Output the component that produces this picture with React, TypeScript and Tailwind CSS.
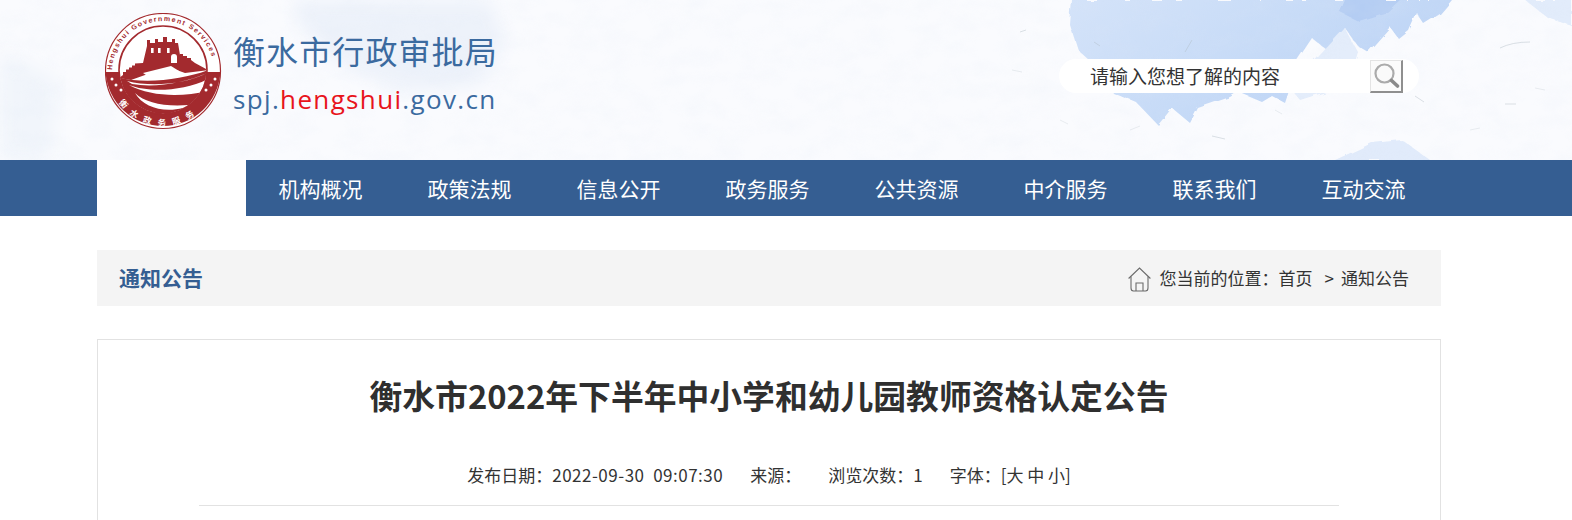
const NAV = ["机构概况", "政策法规", "信息公开", "政务服务", "公共资源", "中介服务", "联系我们", "互动交流"];

function HeaderWash() {
  return (
    <svg className="absolute inset-0 h-full w-full" viewBox="0 0 1572 160" preserveAspectRatio="none" aria-hidden="true">
      <defs>
        <linearGradient id="wash" x1="0" y1="0" x2="1" y2="0.5">
          <stop offset="0" stopColor="#d4e3f9" />
          <stop offset="0.55" stopColor="#c7dbf7" />
          <stop offset="1" stopColor="#bcd3f5" />
        </linearGradient>
        <filter id="rough" x="-5%" y="-5%" width="110%" height="110%">
          <feTurbulence type="fractalNoise" baseFrequency="0.06" numOctaves="3" seed="4" result="n" />
          <feDisplacementMap in="SourceGraphic" in2="n" scale="6" result="d" />
          <feGaussianBlur in="d" stdDeviation="0.7" />
        </filter>
        <filter id="softer"><feGaussianBlur stdDeviation="9" /></filter>
        <filter id="paper" x="0" y="0" width="100%" height="100%">
          <feTurbulence type="fractalNoise" baseFrequency="0.035 0.06" numOctaves="4" seed="9" />
          <feColorMatrix values="0 0 0 0 0.72  0 0 0 0 0.79  0 0 0 0 0.90  0.9 0 0 0 -0.33" />
        </filter>
      </defs>
      <rect width="1572" height="160" fill="#fafbfe" />
      <path d="M295 0 L490 0 L505 40 L480 85 L410 92 L335 62 L300 25Z" fill="#edf2fa" filter="url(#softer)" />
      <path d="M0 50 L60 80 L50 160 L0 160Z" fill="#f1f5fb" filter="url(#softer)" />
      <path d="M1072 0 L1452 0 L1440 14 L1424 24 L1416 12 L1408 30 L1398 38 L1390 27 L1368 52 L1358 46 L1345 28 L1332 54 L1312 38 L1296 62 L1290 88 L1285 103 L1272 96 L1262 102 L1238 92 L1230 97 L1198 108 L1190 123 L1172 108 L1158 125 L1136 102 L1112 92 L1100 70 L1078 50 L1070 25Z" fill="url(#wash)" filter="url(#rough)" />
      <path d="M1290 88 L1320 55 L1345 28 L1358 52 L1348 85 L1300 100Z" fill="#e4edfb" filter="url(#rough)" />
      <path d="M1345 0 L1400 0 L1385 14 L1360 22 L1340 12Z" fill="#b4cdf3" filter="url(#rough)" />
      <path d="M1525 0 L1572 0 L1572 26 L1548 18Z" fill="#e2ecfb" filter="url(#rough)" />
      <path d="M1335 160 L1372 143 L1402 140 L1430 160Z" fill="#e1ebfb" filter="url(#rough)" />
      <rect width="1572" height="160" filter="url(#paper)" opacity="0.25" />
      <path d="M1500 48 Q1512 42 1530 42 M1185 52 L1192 40 M1094 42 L1100 46 M1415 96 L1424 102 M1505 104 L1516 104 M1020 32 L1026 30 M1212 136 L1225 139" stroke="#aeb9c4" strokeWidth="0.8" fill="none" opacity="0.55" />
      <path d="M1012 70 L1022 72 M1130 130 L1140 126 M1275 110 L1282 114 M1470 130 L1480 128 M1535 88 L1545 90 M1060 120 L1068 124" stroke="#c6ced6" strokeWidth="0.8" fill="none" opacity="0.45" />
    </svg>
  );
}

function Logo() {
  const red = "#a32a2e";
  return (
    <svg width="118" height="118" viewBox="0 0 118 118" className="shrink-0">
      <defs>
        <path id="ringTop" d="M7 60 A51 51 0 0 1 109 58" />
        <path id="ringBot" d="M6 70 A53 53 0 0 0 110 70" />
        <clipPath id="inner"><circle cx="58" cy="57" r="43.5" /></clipPath>
      </defs>
      <circle cx="58" cy="58" r="57.5" fill="#fff" stroke={red} strokeWidth="1.2" />
      <path d="M0.6 59 L115.4 59 A57.5 57.5 0 0 1 0.6 59Z" fill={red} />
      <circle cx="58" cy="57" r="44" fill="#fff" />
      <g clipPath="url(#inner)">
        <path d="M14 65 L18 62 L18 59 L21 59 L21 56.5 L24 56.5 L24 54.5 L27 54.5 L27 52.5 L30 52.5 L30 50.5 L38 50 L42 33 L42 27 L45 27 L45 30 L50 30 L50 26 L53 26 L53 29 L58 29 L58 24 L62 24 L62 29 L67 29 L67 26 L70 26 L70 30 L73 30 L75 42 L75 41 L78 41 L78 43 L82 43 L82 45 L86 45 L86 47 L90 50 L103 57 L80 60 L66 55 L40 62 L26 67Z" fill={red} />
        <rect x="46" y="35" width="2.6" height="5" fill="#fff" />
        <rect x="53" y="35" width="2.6" height="5" fill="#fff" />
        <rect x="62" y="35" width="2.6" height="5" fill="#fff" />
        <path d="M66 50 L66 44 A3 3 0 0 1 72 44 L72 50Z" fill="#fff" />
        <path d="M38 60 L66 53 L74 58 L44 64Z" fill="#fff" />
        <path d="M12 64 C40 72 82 66 106 56 L106 106 L12 106Z" fill={red} />
        <path d="M22 68 C45 74 78 72 102 60 C80 70 50 75 27 71Z" fill="#fff" />
        <path d="M24 72 C44 80 80 78 103 66 L102 78 C78 84 46 84 24 72Z" fill="#fff" />
        <path d="M30 80 C40 90 60 94 84 92 L78 95 C58 100 38 94 30 80Z" fill="#fff" />
      </g>
      <circle cx="58" cy="57" r="44" fill="none" stroke={red} strokeWidth="1.6" />
      <circle cx="7" cy="66" r="1.5" fill="#fff" />
      <circle cx="11" cy="72" r="1.5" fill="#fff" />
      <circle cx="16" cy="77" r="1.5" fill="#fff" />
      <circle cx="110" cy="66" r="1.5" fill="#fff" />
      <circle cx="106" cy="72" r="1.5" fill="#fff" />
      <circle cx="101" cy="77" r="1.5" fill="#fff" />
      <text fontSize="7" fontWeight="700" fill={red} letterSpacing="1.35" style={{ fontFamily: '"Liberation Sans", sans-serif' }}>
        <textPath href="#ringTop" startOffset="3">Hengshui Government Services</textPath>
      </text>
      <text fontSize="8.5" fontWeight="700" fill="#fff" letterSpacing="7" style={{ fontFamily: '"Noto Sans CJK SC", sans-serif' }}>
        <textPath href="#ringBot" startOffset="21">衡水政务服务</textPath>
      </text>
    </svg>
  );
}

function SearchIcon() {
  return (
    <svg width="28" height="28" viewBox="0 0 28 28" fill="none" aria-hidden="true">
      <circle cx="12.5" cy="11.5" r="9" stroke="#ababab" strokeWidth="2.2" fill="#fafafa" />
      <path d="M19.5 18.5 L25.5 24" stroke="#8a8a8a" strokeWidth="3.6" strokeLinecap="round" />
    </svg>
  );
}

function HomeIcon() {
  return (
    <svg width="23" height="25" viewBox="0 0 23 25" fill="none" stroke="#6b6b6b" strokeWidth="1.1" aria-hidden="true">
      <path d="M0.6 11.5 L11.5 1 L22.4 11.5" />
      <path d="M3 9.5 L3 21 C3 23 4 24 5.5 24 L17.5 24 C19 24 20 23 20 21 L20 9.5" />
      <path d="M8 24 L8 16 L15 16 L15 24" />
    </svg>
  );
}

export default function App() {
  return (
    <div className="h-[520px] w-[1572px] overflow-hidden bg-white text-[#333] font-['Noto_Sans_CJK_SC','Microsoft_YaHei',sans-serif]">
      <header className="relative h-40">
        <HeaderWash />
        <div className="relative flex h-full items-start pl-[105px] pr-[153px]">
          <div className="mt-[13px]"><Logo /></div>
          <div className="ml-[10px] mt-[29px] flex flex-col">
            <div className="text-[32px] leading-[42px] tracking-[1.1px] text-[#3b6a9f]">衡水市行政审批局</div>
            <div className="mt-[10px] text-[26px] leading-[36px] tracking-[1.35px] text-[#3b6a9f] font-['Open_Sans',sans-serif]">
              spj.<span className="text-[#e8141c]">hengshui</span>.gov.cn
            </div>
          </div>
          <div className="ml-auto mt-[59px] flex h-[34px] w-[360px] items-center rounded-[17px] bg-white pl-[31px] pr-[16px]">
            <span className="text-[19px] leading-[34px] text-[#333]">请输入您想了解的内容</span>
            <span className="ml-auto flex h-[33px] w-[33px] items-center justify-center border-b-2 border-r-2 border-l border-t border-b-[#8f8f8f] border-r-[#8f8f8f] border-l-[#e4e4e4] border-t-[#e4e4e4] bg-[#fbfbfb]">
              <SearchIcon />
            </span>
          </div>
        </div>
      </header>

      <nav className="flex h-14 bg-[#355e92] pl-[97px]">
        <div className="h-14 w-[149px] bg-white" />
        {NAV.map((item) => (
          <a key={item} className="flex h-14 w-[149px] items-center justify-center pt-[1px] text-[21px] text-white">{item}</a>
        ))}
      </nav>

      <main className="ml-[97px] w-[1344px]">
        <div className="mt-[34px] flex h-14 items-center justify-between bg-[#f4f4f4] pl-[22px] pr-[32px]">
          <h2 className="text-[21px] font-bold text-[#355e92]">通知公告</h2>
          <div className="flex items-center text-[17px] text-[#333]">
            <span className="mr-[9px] mt-[2px]"><HomeIcon /></span>
            <span>您当前的位置：</span>
            <span>首页</span>
            <span className="ml-[12px]">&gt;</span>
            <span className="ml-[7px]">通知公告</span>
          </div>
        </div>

        <article className="mt-[33px] h-[300px] border border-[#e2e2e2] px-[101px]">
          <h1 className="mt-[30px] text-center text-[32.8px] font-bold leading-[50px] text-[#2f2f2f]">衡水市2022年下半年中小学和幼儿园教师资格认定公告</h1>
          <div className="mt-[41px] flex h-[45px] items-start justify-center whitespace-pre border-b border-[#e2e2e2] text-[17px] leading-[28px] text-[#333]">
            <span>发布日期：<span className="tracking-[0.5px]">2022-09-30  09:07:30</span></span>
            <span className="ml-[27px]">来源：</span>
            <span className="ml-[27px]">浏览次数：1</span>
            <span className="ml-[27px]">字体：[大 中 小]</span>
          </div>
        </article>
      </main>
    </div>
  );
}
